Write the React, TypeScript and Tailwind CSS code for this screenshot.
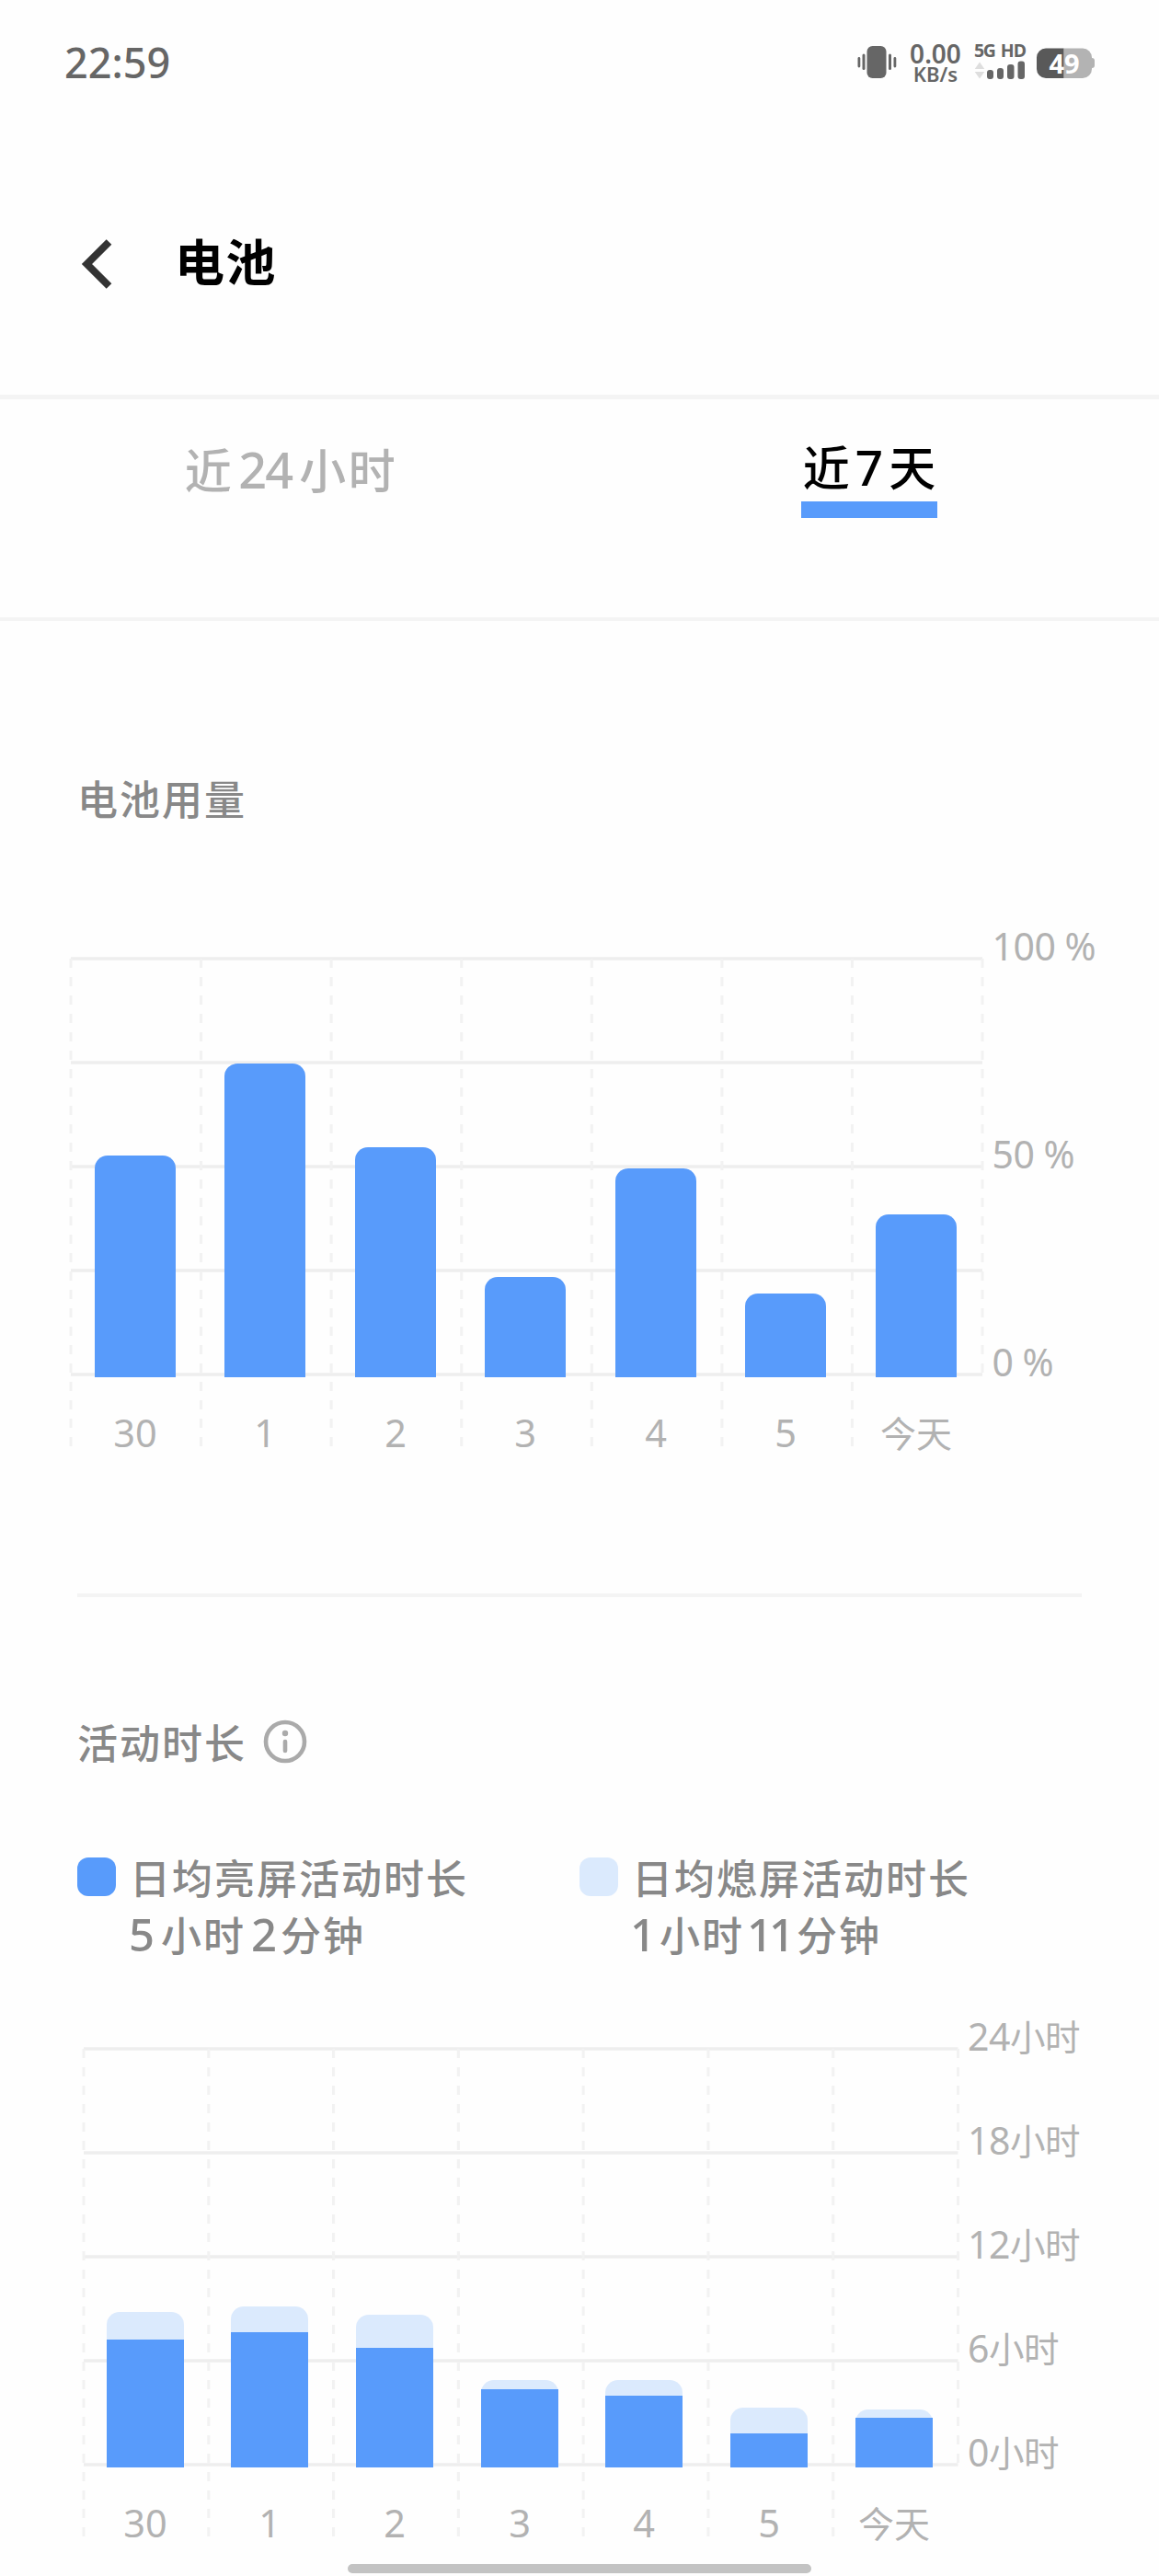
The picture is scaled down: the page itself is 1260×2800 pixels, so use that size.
import { ReactNode } from "react";

type Day = { label: string; x: number; top: number; split?: number };
type Tick = { y: number; num: string; unit?: string };

const usage: Day[] = [
  { label: "30", x: 103, top: 316 },
  { label: "1", x: 244, top: 216 },
  { label: "2", x: 386, top: 307 },
  { label: "3", x: 527, top: 448 },
  { label: "4", x: 669, top: 330 },
  { label: "5", x: 810, top: 466 },
  { label: "今天", x: 952, top: 380 },
];

const activity: Day[] = [
  { label: "30", x: 116, top: 388, split: 418 },
  { label: "1", x: 251, top: 382, split: 410 },
  { label: "2", x: 387, top: 391, split: 427 },
  { label: "3", x: 523, top: 462, split: 472 },
  { label: "4", x: 658, top: 462, split: 479 },
  { label: "5", x: 794, top: 492, split: 520 },
  { label: "今天", x: 930, top: 494, split: 503 },
];

const usageTicks: Tick[] = [
  { y: 104, num: "100 %" },
  { y: 330, num: "50 %" },
  { y: 556, num: "0 %" },
];

const activityTicks: Tick[] = [
  { y: 103.5, num: "24", unit: "小时" },
  { y: 216.5, num: "18", unit: "小时" },
  { y: 329.5, num: "12", unit: "小时" },
  { y: 442.5, num: "6", unit: "小时" },
  { y: 555.5, num: "0", unit: "小时" },
];

// rounded top corners, square bottom
function barPath(x: number, y: number, w: number, bottom: number) {
  const r = 14;
  return `M${x} ${bottom}V${y + r}a${r} ${r} 0 0 1 ${r} ${-r}H${x + w - r}a${r} ${r} 0 0 1 ${r} ${r}V${bottom}Z`;
}

type ChartProps = {
  days: Day[];
  ticks: Tick[];
  left: number;
  right: number;
  top: number;
  barWidth: number;
};

function Chart({ days, ticks, left, right, top, barWidth }: ChartProps) {
  const step = (right - left) / 7;
  const bottom = top + 455;

  return (
    <svg width="1260" height="660" viewBox="0 0 1260 660" className="block">
      {[0, 1, 2, 3, 4].map((i) => (
        <line key={i} x1={left} x2={right} y1={top + i * 113} y2={top + i * 113} stroke="#eeeeee" strokeWidth="3.5" />
      ))}
      {[0, 1, 2, 3, 4, 5, 6, 7].map((i) => (
        <line
          key={i}
          x1={left + i * step}
          x2={left + i * step}
          y1={top}
          y2={i === 7 ? top + 450 : top + 530}
          stroke="#f2f2f2"
          strokeWidth="3"
          strokeDasharray="10 10"
        />
      ))}
      {days.map((d) => (
        <g key={d.label}>
          <path d={barPath(d.x, d.top, barWidth, bottom)} fill={d.split ? "#dbeafd" : "#589bfb"} />
          {d.split && <rect x={d.x} y={d.split} width={barWidth} height={bottom - d.split} fill="#589bfb" />}
          <text
            x={d.x + barWidth / 2}
            y={top + 531}
            textAnchor="middle"
            fill="#b2b2b2"
            fontSize={d.label === "今天" ? 39 : 41.5}
          >
            {d.label}
          </text>
        </g>
      ))}
      {ticks.map((t) => (
        <text key={t.y} x={right + 10.5} y={t.y} fill="#b2b2b2" fontSize="41" letterSpacing="-0.5">
          {t.num}
          {t.unit && <tspan fontSize="38.5">{t.unit}</tspan>}
        </text>
      ))}
    </svg>
  );
}

function StatusBar() {
  return (
    <div className="flex h-[136px] items-start justify-between pl-[70px] pr-[69px] pt-[44px] text-[#666666]">
      <span className="text-[45px] font-medium leading-[48px]">22:59</span>
      <div className="flex items-start">
        <svg width="44" height="48" viewBox="0 0 44 48" fill="currentColor">
          <rect x="0.5" y="18" width="2.8" height="11.5" rx="1.4" />
          <rect x="5.5" y="14.5" width="3" height="17.5" rx="1.5" />
          <rect x="10.5" y="6" width="21" height="35" rx="6" />
          <rect x="34" y="14.5" width="3" height="17.5" rx="1.5" />
          <rect x="39.5" y="18" width="2.8" height="11.5" rx="1.4" />
        </svg>
        <div className="ml-3 flex w-[58px] flex-col items-center pt-[2px] font-semibold">
          <span className="text-[28px] leading-[24px]">0.00</span>
          <span className="text-[22px] leading-[20px]">KB/s</span>
        </div>
        <div className="ml-[13px] w-[58px] pt-[2px]">
          <div className="flex w-[56px] justify-between text-[19.5px] font-bold leading-[18px]">
            <span className="tracking-[-1.5px]">5G</span>
            <span className="tracking-[-1px]">HD</span>
          </div>
          <svg width="58" height="22" viewBox="0 0 58 22" fill="currentColor">
            <path d="M0.7 11L6 3.5l5.300 7.500zM0.700 14h10.600L6 21.500z" fill="#dedede" />
            <rect x="14" y="12" width="7" height="10" rx="3" />
            <rect x="25" y="10" width="7" height="12" rx="3" />
            <rect x="36" y="6" width="7.500" height="16" rx="3" />
            <rect x="47.500" y="2.500" width="7.500" height="19.500" rx="3" />
          </svg>
        </div>
        <svg width="64" height="48" viewBox="0 0 64 48" className="ml-2.5">
          <rect x="56" y="19" width="7" height="11" rx="3" fill="#b3b3b3" />
          <path d="M29.500 8.500H50a10 10 0 0 1 10 10V31a10 10 0 0 1-10 10H29.500z" fill="#b3b3b3" />
          <path d="M29.500 8.500H10a10 10 0 0 0-10 10V31a10 10 0 0 0 10 10h19.500z" fill="#595959" />
          <text x="30" y="36" textAnchor="middle" fontSize="29" fontWeight="700" fill="#ffffff">
            49
          </text>
        </svg>
      </div>
    </div>
  );
}

function Header() {
  return (
    <header className="flex h-[298px] items-start border-b-[5px] border-[#f4f4f4] pl-[88px] pt-[124px]">
      <svg width="34" height="54" viewBox="0 0 34 54" fill="none" stroke="#333333" strokeWidth="8">
        <path d="M30.500 3L6.500 27l24 24" />
      </svg>
      <h1 className="ml-[68px] -mt-[5px] text-[54px] font-bold leading-[60px] tracking-[1.5px] text-black">电池</h1>
    </header>
  );
}

function Tabs() {
  return (
    <nav className="grid h-[241px] grid-cols-2 justify-items-center border-b-4 border-[#f4f4f4] text-[51px]">
      <div className="ml-[3px] mt-[45px] h-[64px] whitespace-nowrap font-medium leading-[64px] tracking-[2.5px] text-[#b2b2b2]">
        近<span className="ml-[5px] mr-[8px] text-[54px] leading-none tracking-[-2px]">24</span>小时
      </div>
      <div className="mt-[42px] h-[87px] whitespace-nowrap border-b-[18px] border-[#589bfb] px-[2px] font-medium leading-[64px] text-black">
        近<span className="mx-[6px] text-[53px] leading-none">7</span>天
      </div>
    </nav>
  );
}

function LegendItem({ swatch, title, children }: { swatch: string; title: string; children: ReactNode }) {
  return (
    <div className="flex w-[546px] items-start">
      <span className={`mt-[9px] size-[42px] rounded-xl ${swatch}`} />
      <div className="ml-[15px] mt-px text-[44px] font-medium leading-[62px] tracking-[2px] text-[#888888]">
        <p className="h-[62px]">{title}</p>
        <p className="h-[61px]">{children}</p>
      </div>
    </div>
  );
}

export default function App() {
  return (
    <div className="flex h-[2800px] w-[1260px] flex-col overflow-hidden bg-[#fefefe] font-['Noto_Sans','Noto_Sans_CJK_SC',sans-serif]">
      <StatusBar />
      <Header />
      <Tabs />

      <section className="h-[1057px] pt-[163px]">
        <h2 className="pl-[84px] text-[44px] font-medium leading-[62px] tracking-[2px] text-[#888888]">电池用量</h2>
        <div className="mt-[40px]">
          <Chart days={usage} ticks={usageTicks} left={77} right={1068} top={102} barWidth={88} />
        </div>
      </section>

      <hr className="mx-[84px] h-1 border-0 bg-[#f4f4f4]" />

      <section className="h-[1051px] pt-[128px]">
        <div className="flex h-[62px] items-center pl-[84px]">
          <h2 className="text-[44px] font-medium leading-[62px] tracking-[2px] text-[#888888]">活动时长</h2>
          <svg width="48" height="48" viewBox="0 0 48 48" className="ml-[18px] -mt-1" fill="none" stroke="#aaaaaa">
            <circle cx="24" cy="24" r="21" strokeWidth="4.600" />
            <circle cx="24" cy="15" r="3.200" fill="#aaaaaa" stroke="none" />
            <path d="M24 24v10" strokeWidth="4.600" strokeLinecap="round" />
          </svg>
        </div>
        <div className="mt-[84px] flex pl-[84px]">
          <LegendItem swatch="bg-[#589bfb]" title="日均亮屏活动时长">
            <span className="-ml-[1px] mr-[5px] text-[49px] leading-none">5</span>小时
            <span className="ml-[6px] mr-[2px] text-[49px] leading-none">2</span>分钟
          </LegendItem>
          <LegendItem swatch="bg-[#dbeafd]" title="日均熄屏活动时长">
            <span className="-ml-[2px] mr-[2px] text-[49px] leading-none">1</span>小时
            <span className="ml-[3px] mr-[6px] text-[49px] leading-none tracking-[-4px]">11</span>分钟
          </LegendItem>
        </div>
        <div className="-mt-[9px]">
          <Chart days={activity} ticks={activityTicks} left={91} right={1041.5} top={102} barWidth={84} />
        </div>
      </section>

      {/* gesture bar */}
      <div className="mx-auto h-2.5 w-[504px] shrink-0 rounded-full bg-[#c3c3c3]" />
    </div>
  );
}
